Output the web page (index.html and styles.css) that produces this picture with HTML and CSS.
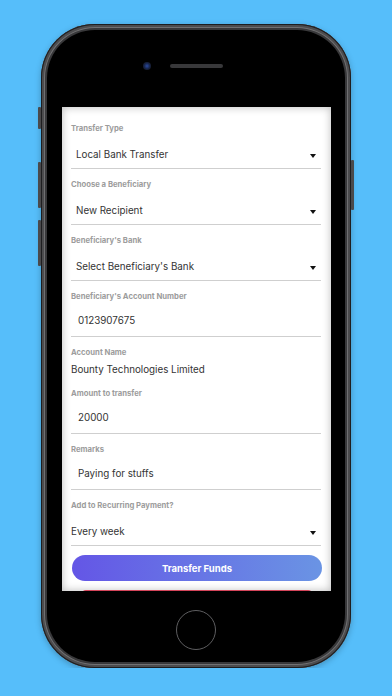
FILE: index.html
```html
<!DOCTYPE html>
<html lang="en">
<head>
    <meta charset="UTF-8">
    <title>Transfer Funds</title>
    <link rel="stylesheet" href="styles.css">
</head>
<body>
    <div class="phone">
        <span class="side side-mute"></span>
        <span class="side side-up"></span>
        <span class="side side-down"></span>
        <span class="side side-power"></span>

        <div class="screen">
            <div class="top">
                <span class="camera"></span>
                <span class="speaker"></span>
            </div>

            <div class="card">
                <div class="field">
                    <div class="label">Transfer Type</div>
                    <div class="value select">Local Bank Transfer<i class="caret"></i></div>
                </div>
                <div class="field">
                    <div class="label">Choose a Beneficiary</div>
                    <div class="value select">New Recipient<i class="caret"></i></div>
                </div>
                <div class="field">
                    <div class="label">Beneficiary's Bank</div>
                    <div class="value select">Select Beneficiary's Bank<i class="caret"></i></div>
                </div>
                <div class="field">
                    <div class="label">Beneficiary's Account Number</div>
                    <div class="value input">0123907675</div>
                </div>
                <div class="field">
                    <div class="label">Account Name</div>
                    <div class="plain">Bounty Technologies Limited</div>
                </div>
                <div class="field">
                    <div class="label">Amount to transfer</div>
                    <div class="value input">20000</div>
                </div>
                <div class="field">
                    <div class="label">Remarks</div>
                    <div class="value input">Paying for stuffs</div>
                </div>
                <div class="field">
                    <div class="label">Add to Recurring Payment?</div>
                    <div class="value select flush">Every week<i class="caret"></i></div>
                </div>

                <button class="btn btn-main">Transfer Funds</button>
                <!-- next button is scrolled below the fold, only its top edge shows -->
                <div class="btn btn-cancel"></div>
            </div>

            <div class="bottom">
                <span class="home"></span>
            </div>
        </div>
    </div>
</body>
</html>
```

FILE: styles.css
```css
body {
    margin: 0;
    background: #56befa;
    font-family: Inter, "Open Sans", sans-serif;
}

/* phone body */
.phone {
    position: relative;
    width: 310px;
    height: 644px;
    margin: 24px auto 0;
    padding: 6px;
    box-sizing: border-box;
    border-radius: 54px;
    background: #38383a;
    box-shadow: inset 0 0 0 1px #1e1e20, inset 0 0 0 3px #4c4c4e, inset 0 0 0 4px #707072,
        0 2px 6px rgba(0, 0, 0, 0.25);
}

.side {
    position: absolute;
    width: 3px;
    background: #4a4a4c;
    border-radius: 1px;
}
.side-mute { left: -3px; top: 83px; height: 22px; }
.side-up { left: -3px; top: 138px; height: 46px; }
.side-down { left: -3px; top: 196px; height: 46px; }
.side-power { right: -3px; top: 136px; height: 50px; }

.screen {
    height: 100%;
    background: #000;
    border-radius: 48px;
    display: flex;
    flex-direction: column;
    overflow: hidden;
}

.top {
    height: 77px;
    display: flex;
    align-items: flex-start;
    padding: 32px 0 0 96px;
    box-sizing: border-box;
}
.camera {
    width: 8px;
    height: 8px;
    border-radius: 50%;
    background: radial-gradient(circle, #2a4aa0 0, #15203f 55%, #1a1a1c 100%);
}
.speaker {
    width: 53px;
    height: 4px;
    margin: 2px 0 0 19px;
    border-radius: 2px;
    background: #38383a;
}

/* the form */
.card {
    height: 484px;
    margin: 0 14px 0 15px;
    padding: 17px 10px 0 9px;
    box-sizing: border-box;
    background: #fff;
    overflow: hidden;
    box-shadow: inset 0 0 8px rgba(0, 0, 0, 0.28);
}

.field {
    margin-bottom: 11px;
}
.label {
    font-size: 7.7px;
    line-height: 10px;
    font-weight: 700;
    color: #9c9c9c;
}
.value {
    position: relative;
    font-size: 9.8px;
    line-height: 20px;
    color: #333;
    border-bottom: 1px solid #cfcfcf;
}
.select {
    margin-top: 11px;
    padding: 0 0 3px 5px;
}
.select.flush {
    padding-left: 0;
}
.input {
    margin-top: 9px;
    padding: 0 0 5px 7px;
}
.plain {
    margin-top: 4px;
    font-size: 9.8px;
    line-height: 16px;
    color: #333;
}
.caret {
    position: absolute;
    right: 5px;
    top: 9px;
    border-left: 3px solid transparent;
    border-right: 3px solid transparent;
    border-top: 4px solid #111;
}

.btn {
    display: block;
    width: 250px;
    height: 26px;
    margin: -2px 0 0 1px;
    border: 0;
    border-radius: 13px;
    font-family: inherit;
    font-size: 9.5px;
    font-weight: 700;
    color: #fff;
}
.btn-main {
    background: linear-gradient(to right, #6456e6, #6a94e4);
}
.btn-cancel {
    width: 230px;
    margin: 9px 0 0 11px;
    border-radius: 4px;
    background: #d4455a;
}

.bottom {
    flex: 1;
    display: flex;
    justify-content: center;
    padding-top: 19px;
}
.home {
    width: 38px;
    height: 38px;
    border-radius: 50%;
    border: 1.5px solid #5e5e60;
}
```
